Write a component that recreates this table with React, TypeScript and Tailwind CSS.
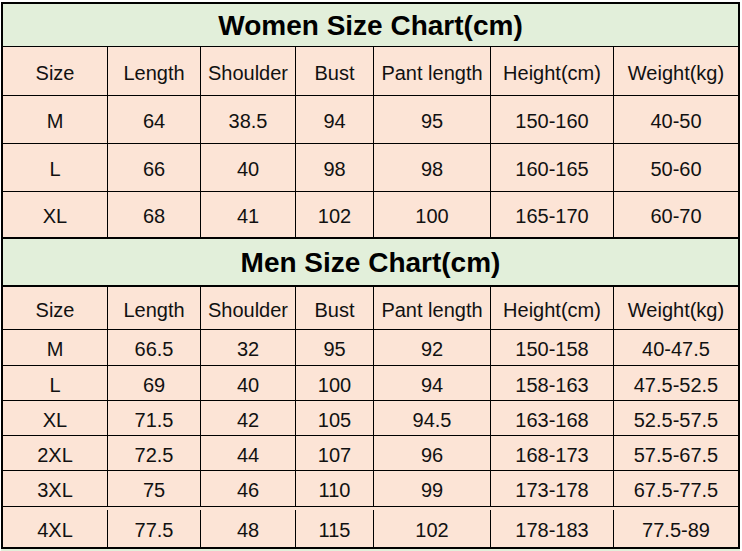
const cols = "grid grid-cols-[105px_93px_95px_78px_117px_123px_124px]";

const headers = ["Size", "Length", "Shoulder", "Bust", "Pant length", "Height(cm)", "Weight(kg)"];

const women: { h: string; cells: string[] }[] = [
  { h: "h-[48px] border-b", cells: ["M", "64", "38.5", "94", "95", "150-160", "40-50"] },
  { h: "h-[48px] border-b", cells: ["L", "66", "40", "98", "98", "160-165", "50-60"] },
  { h: "h-[47px] border-b-2", cells: ["XL", "68", "41", "102", "100", "165-170", "60-70"] },
];

const men: { h: string; cells: string[] }[] = [
  { h: "h-[36px] border-b", cells: ["M", "66.5", "32", "95", "92", "150-158", "40-47.5"] },
  { h: "h-[35px] border-b", cells: ["L", "69", "40", "100", "94", "158-163", "47.5-52.5"] },
  { h: "h-[35px] border-b", cells: ["XL", "71.5", "42", "105", "94.5", "163-168", "52.5-57.5"] },
  { h: "h-[35px] border-b", cells: ["2XL", "72.5", "44", "107", "96", "168-173", "57.5-67.5"] },
  { h: "h-[36px] border-b", cells: ["3XL", "75", "46", "110", "99", "173-178", "67.5-77.5"] },
  { h: "h-[40px] pt-[3px]", cells: ["4XL", "77.5", "48", "115", "102", "178-183", "77.5-89"] },
];

function Row({ h, cells }: { h: string; cells: string[] }) {
  return (
    <div className={`${cols} ${h} border-black bg-[#fce4d6]`}>
      {cells.map((c, i) => (
        <div
          key={i}
          className={`flex items-center justify-center pt-[3px] text-[20px] text-[#111] ${i < 6 ? "border-r border-black" : ""}`}
        >
          {c}
        </div>
      ))}
    </div>
  );
}

function Title({ text, h }: { text: string; h: string }) {
  return (
    <div className={`${h} flex items-center justify-center pt-[2px] border-black bg-[#e2efda] text-[28px] font-bold text-black`}>
      {text}
    </div>
  );
}

export default function App() {
  return (
    <div className="w-[742px] h-[551px] overflow-hidden bg-white" style={{ fontFamily: '"Liberation Sans", Arial, sans-serif' }}>
      <div className="ml-[1px] mt-[2px] w-[739px] border-2 border-black">
        <Title text="Women Size Chart(cm)" h="h-[43px] border-b" />
        <Row h="h-[49px] border-b" cells={headers} />
        {women.map((r, i) => (
          <Row key={i} h={r.h} cells={r.cells} />
        ))}
        <Title text="Men Size Chart(cm)" h="h-[48px] border-b-2" />
        <Row h="h-[43px] border-b" cells={headers} />
        {men.map((r, i) => (
          <Row key={i} h={r.h} cells={r.cells} />
        ))}
      </div>
      <div className="ml-[1px] h-[10px] w-[739px] bg-[#e2efda]" />
    </div>
  );
}
